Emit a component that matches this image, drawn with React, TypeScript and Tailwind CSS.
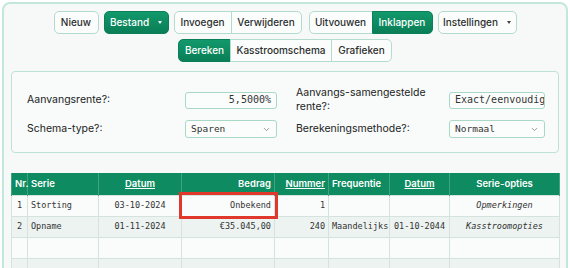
import { ChevronDown } from "lucide-react";
import * as React from "react";

const btn =
  "flex h-[23px] items-center justify-center border border-[#b3dccd] bg-[#fbfdfc] text-[10px] font-medium text-[#2b2f2e]";
const btnOn =
  "flex h-[23px] items-center justify-center border border-[#0b7f57] bg-gradient-to-b from-[#12996b] to-[#0a7e56] text-[10px] font-medium text-white";

function Caret({ light }: { light?: boolean }): React.JSX.Element {
  return (
    <span
      className={`ml-[9px] inline-block size-0 border-x-[2.5px] border-t-[3px] border-x-transparent ${
        light ? "border-t-white" : "border-t-[#444]"
      }`}
    />
  );
}

function Field({ value, right }: { value: string; right?: boolean }): React.JSX.Element {
  return (
    <div
      className={`flex h-[17px] items-center overflow-hidden rounded-[3px] border border-[#a9d8c5] bg-[#fbfdfc] px-[5px] font-['DejaVu_Sans_Mono',monospace] text-[10px] whitespace-nowrap text-[#333] ${
        right ? "justify-end" : ""
      }`}
    >
      {value}
    </div>
  );
}

function Select({ value }: { value: string }): React.JSX.Element {
  return (
    <div className="flex h-[18px] items-center justify-between rounded-[3px] border border-[#a9d8c5] bg-[#fbfdfc] px-[5px] font-['DejaVu_Sans_Mono',monospace] text-[9.5px] text-[#333]">
      {value}
      <ChevronDown className="size-[9px] text-[#777]" strokeWidth={2} />
    </div>
  );
}

const rows = [
  { nr: "1", serie: "Storting", datum: "03-10-2024", bedrag: "Onbekend", nummer: "1", freq: "", eind: "", opt: "Opmerkingen", mark: true },
  { nr: "2", serie: "Opname", datum: "01-11-2024", bedrag: "€35.045,00", nummer: "240", freq: "Maandelijks", eind: "01-10-2044", opt: "Kasstroomopties", mark: false },
  { nr: "", serie: "", datum: "", bedrag: "", nummer: "", freq: "", eind: "", opt: "", mark: false },
  { nr: "", serie: "", datum: "", bedrag: "", nummer: "", freq: "", eind: "", opt: "", mark: false },
];

export default function App(): React.JSX.Element {
  const th = "h-[22px] border-x border-[#3ea47f] px-[3px] text-[9.5px] font-semibold text-white";
  const td = "h-[21px] border border-[#d4e3dd] px-[3px] text-[8.5px] whitespace-nowrap text-[#333]";

  return (
    <div className="h-[268px] overflow-hidden bg-white p-[2px] font-['Inter',sans-serif]">
      <div className="h-[320px] w-[566px] rounded-lg border-2 border-[#c3e7da] bg-[#f6f9f8] px-[7px] pt-[7px]">
        <div className="flex justify-center gap-[5px]">
          <button className={`${btn} w-[45px] rounded-[5px]`}>Nieuw</button>
          <button className={`${btnOn} w-[65px] rounded-[5px]`}>
            Bestand
            <Caret light />
          </button>
          <div className="flex">
            <button className={`${btn} w-[58px] rounded-l-[5px]`}>Invoegen</button>
            <button className={`${btn} -ml-px w-[71px] rounded-r-[5px]`}>Verwijderen</button>
          </div>
          <div className="ml-[2px] flex">
            <button className={`${btn} w-[64px] rounded-l-[5px]`}>Uitvouwen</button>
            <button className={`${btnOn} -ml-px w-[61px] rounded-r-[5px]`}>Inklappen</button>
          </div>
          <button className={`${btn} w-[79px] rounded-[5px]`}>
            Instellingen
            <Caret />
          </button>
        </div>

        <div className="mt-[5px] flex justify-center">
          <button className={`${btnOn} w-[53px] rounded-l-[5px]`}>Bereken</button>
          <button className={`${btn} -ml-px w-[102px]`}>Kasstroomschema</button>
          <button className={`${btn} -ml-px w-[61px] rounded-r-[5px]`}>Grafieken</button>
        </div>

        <div className="mt-[9px] grid grid-cols-[158px_92px_19px_153px_96px] items-center gap-y-[6px] rounded-[4px] border border-[#bde3d5] bg-[#f8fbfa] px-[15px] py-[14px] text-[10.5px] leading-[14px] text-[#222]">
          <span>Aanvangsrente?:</span>
          <Field value="5,5000%" right />
          <span />
          <span>
            Aanvangs-samengestelde
            <br />
            rente?:
          </span>
          <Field value="Exact/eenvoudig" />

          <span>Schema-type?:</span>
          <Select value="Sparen" />
          <span />
          <span>Berekeningsmethode?:</span>
          <Select value="Normaal" />
        </div>

        <table className="mt-5 w-full table-fixed border-collapse">
          <colgroup>
            <col className="w-[16px]" />
            <col className="w-[71px]" />
            <col className="w-[83px]" />
            <col className="w-[93px]" />
            <col className="w-[54px]" />
            <col className="w-[61px]" />
            <col className="w-[60px]" />
            <col className="w-[110px]" />
          </colgroup>
          <thead className="bg-[#0e8b60]">
            <tr>
              <th className={`${th} px-[2px] text-left`}>Nr.</th>
              <th className={`${th} text-left`}>Serie</th>
              <th className={`${th} text-center underline`}>Datum</th>
              <th className={`${th} text-right`}>Bedrag</th>
              <th className={`${th} text-right underline`}>Nummer</th>
              <th className={`${th} text-left`}>Frequentie</th>
              <th className={`${th} text-center underline`}>Datum</th>
              <th className={`${th} text-center`}>Serie-opties</th>
            </tr>
          </thead>
          <tbody className="font-['DejaVu_Sans_Mono',monospace]">
            {rows.map((r, i) => (
              <tr key={i} className={i % 2 ? "bg-[#edf3f1]" : "bg-[#fafcfb]"}>
                <td className={`${td} text-center`}>{r.nr}</td>
                <td className={`${td} text-left`}>{r.serie}</td>
                <td className={`${td} text-center`}>{r.datum}</td>
                <td
                  className={`${td} text-right ${
                    r.mark ? "outline-3 outline-[#e0392b]" : ""
                  }`}
                >
                  {r.bedrag}
                </td>
                <td className={`${td} text-right`}>{r.nummer}</td>
                <td className={`${td} text-left`}>{r.freq}</td>
                <td className={`${td} text-center`}>{r.eind}</td>
                <td className={`${td} text-center italic`}>{r.opt}</td>
              </tr>
            ))}
          </tbody>
        </table>
      </div>
    </div>
  );
}
